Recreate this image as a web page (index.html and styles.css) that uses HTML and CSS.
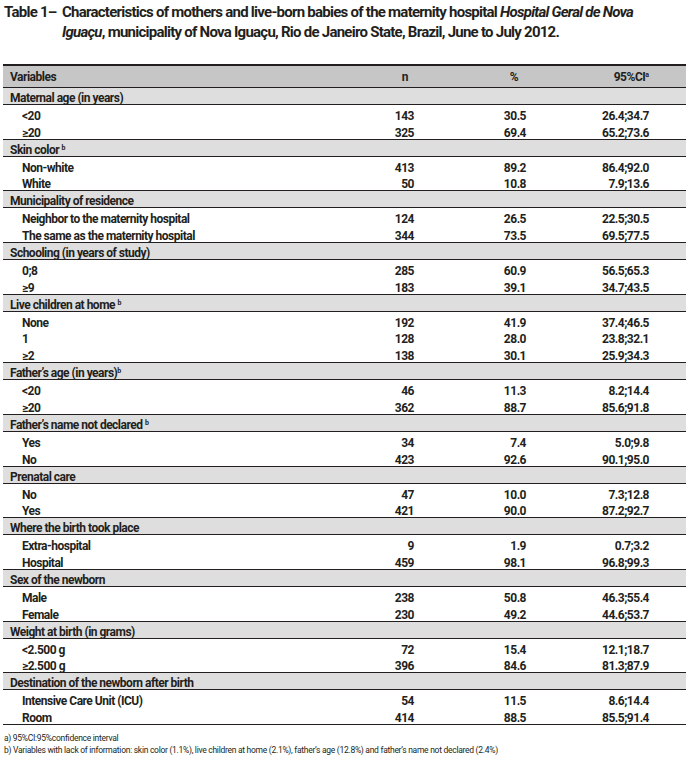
FILE: index.html
```html
<!DOCTYPE html>
<html lang="en">
<head>
<meta charset="utf-8">
<title>Table 1</title>
<link rel="stylesheet" href="styles.css">
</head>
<body>
<div class="page">
  <div class="caption">
    <span class="cap-label">Table 1–</span>
    <span class="cap-text">Characteristics of mothers and live-born babies of the maternity hospital <i>Hospital Geral de Nova</i><br><i>Iguaçu</i>, municipality of Nova Iguaçu, Rio de Janeiro State, Brazil, June to July 2012.</span>
  </div>
  <table class="data">
    <colgroup>
      <col class="c-var"><col class="c-n"><col class="c-pct"><col class="c-ci">
    </colgroup>
    <thead>
      <tr><th class="h-var">Variables</th><th class="h-n">n</th><th class="h-pct">%</th><th class="h-ci">95%CI<sup>a</sup></th></tr>
    </thead>
    <tbody>
      <tr class="grp"><td colspan="4">Maternal age (in years)</td></tr>
      <tr><td class="sub">&lt;20</td><td>143</td><td>30.5</td><td>26.4;34.7</td></tr>
      <tr><td class="sub">≥20</td><td>325</td><td>69.4</td><td>65.2;73.6</td></tr>
      <tr class="grp"><td colspan="4">Skin color <sup>b</sup></td></tr>
      <tr><td class="sub">Non-white</td><td>413</td><td>89.2</td><td>86.4;92.0</td></tr>
      <tr><td class="sub">White</td><td>50</td><td>10.8</td><td>7.9;13.6</td></tr>
      <tr class="grp"><td colspan="4">Municipality of residence</td></tr>
      <tr><td class="sub">Neighbor to the maternity hospital</td><td>124</td><td>26.5</td><td>22.5;30.5</td></tr>
      <tr><td class="sub">The same as the maternity hospital</td><td>344</td><td>73.5</td><td>69.5;77.5</td></tr>
      <tr class="grp"><td colspan="4">Schooling (in years of study)</td></tr>
      <tr><td class="sub">0;8</td><td>285</td><td>60.9</td><td>56.5;65.3</td></tr>
      <tr><td class="sub">≥9</td><td>183</td><td>39.1</td><td>34.7;43.5</td></tr>
      <tr class="grp"><td colspan="4">Live children at home <sup>b</sup></td></tr>
      <tr><td class="sub">None</td><td>192</td><td>41.9</td><td>37.4;46.5</td></tr>
      <tr><td class="sub">1</td><td>128</td><td>28.0</td><td>23.8;32.1</td></tr>
      <tr><td class="sub">≥2</td><td>138</td><td>30.1</td><td>25.9;34.3</td></tr>
      <tr class="grp"><td colspan="4">Father’s age (in years)<sup>b</sup></td></tr>
      <tr><td class="sub">&lt;20</td><td>46</td><td>11.3</td><td>8.2;14.4</td></tr>
      <tr><td class="sub">≥20</td><td>362</td><td>88.7</td><td>85.6;91.8</td></tr>
      <tr class="grp"><td colspan="4">Father’s name not declared <sup>b</sup></td></tr>
      <tr><td class="sub">Yes</td><td>34</td><td>7.4</td><td>5.0;9.8</td></tr>
      <tr><td class="sub">No</td><td>423</td><td>92.6</td><td>90.1;95.0</td></tr>
      <tr class="grp"><td colspan="4">Prenatal care</td></tr>
      <tr><td class="sub">No</td><td>47</td><td>10.0</td><td>7.3;12.8</td></tr>
      <tr><td class="sub">Yes</td><td>421</td><td>90.0</td><td>87.2;92.7</td></tr>
      <tr class="grp"><td colspan="4">Where the birth took place</td></tr>
      <tr><td class="sub">Extra-hospital</td><td>9</td><td>1.9</td><td>0.7;3.2</td></tr>
      <tr><td class="sub">Hospital</td><td>459</td><td>98.1</td><td>96.8;99.3</td></tr>
      <tr class="grp"><td colspan="4">Sex of the newborn</td></tr>
      <tr><td class="sub">Male</td><td>238</td><td>50.8</td><td>46.3;55.4</td></tr>
      <tr><td class="sub">Female</td><td>230</td><td>49.2</td><td>44.6;53.7</td></tr>
      <tr class="grp"><td colspan="4">Weight at birth (in grams)</td></tr>
      <tr><td class="sub">&lt;2.500 g</td><td>72</td><td>15.4</td><td>12.1;18.7</td></tr>
      <tr><td class="sub">≥2.500 g</td><td>396</td><td>84.6</td><td>81.3;87.9</td></tr>
      <tr class="grp"><td colspan="4">Destination of the newborn after birth</td></tr>
      <tr><td class="sub">Intensive Care Unit (ICU)</td><td>54</td><td>11.5</td><td>8.6;14.4</td></tr>
      <tr><td class="sub">Room</td><td>414</td><td>88.5</td><td>85.5;91.4</td></tr>
    </tbody>
  </table>
  <div class="notes">
    <p>a) 95%CI:95%confidence interval</p>
    <p>b) Variables with lack of information: skin color (1.1%), live children at home (2.1%), father’s age (12.8%) and father’s name not declared (2.4%)</p>
  </div>
</div>
</body>
</html>
```
FILE: styles.css
```css
html, body {
  margin: 0;
  padding: 0;
  background: #ffffff;
}
body {
  font-family: Roboto, "Liberation Sans", sans-serif;
  color: #231f20;
}
.page {
  width: 689px;
  padding: 0 3px;
  box-sizing: border-box;
}
.caption {
  display: flex;
  font-size: 15px;
  font-weight: 700;
  letter-spacing: -0.75px;
  line-height: 19.5px;
  padding-top: 3px;
  padding-left: 1px;
  white-space: nowrap;
}
.cap-label {
  width: 58px;
  flex: none;
}
.cap-text i {
  font-style: italic;
}
.data {
  margin-top: 22px;
  width: 683px;
  border-collapse: collapse;
  table-layout: fixed;
  font-size: 12px;
  font-weight: 700;
  letter-spacing: -0.5px;
  white-space: nowrap;
  border-top: 2px solid #231f20;
  border-bottom: 1px solid #231f20;
}
.c-var { width: 351px; }
.c-n { width: 60px; }
.c-pct { width: 112px; }
.c-ci { width: 160px; }
.data th {
  background: #c6c6c6;
  height: 21px;
  padding: 0;
  line-height: 14px;
  text-align: right;
  vertical-align: middle;
  border-bottom: 1px solid #231f20;
}
.data th.h-var { text-align: left; padding-left: 7px; }
.data th.h-n { padding-right: 6px; }
.data th.h-pct { padding-right: 8px; }
.data th.h-ci { padding-right: 37px; }
.data td {
  padding: 0;
  height: 16.85px;
  line-height: 12px;
  vertical-align: bottom;
  text-align: right;
}
.data td:nth-child(4) { padding-right: 37px; }
.data td.sub {
  text-align: left;
  padding-left: 19px;
}
.data tr.grp td {
  background: #dedede;
  height: 16px;
  text-align: left;
  padding-left: 7px;
  border-top: 1px solid #231f20;
  border-bottom: 1px solid #231f20;
}
sup {
  font-size: 7px;
  line-height: 0;
  letter-spacing: 0;
  vertical-align: 4px;
}
.notes {
  margin-top: 7px;
  font-size: 8.5px;
  letter-spacing: -0.28px;
  line-height: 12px;
  padding-left: 1px;
}
.notes p {
  margin: 0;
}
```
